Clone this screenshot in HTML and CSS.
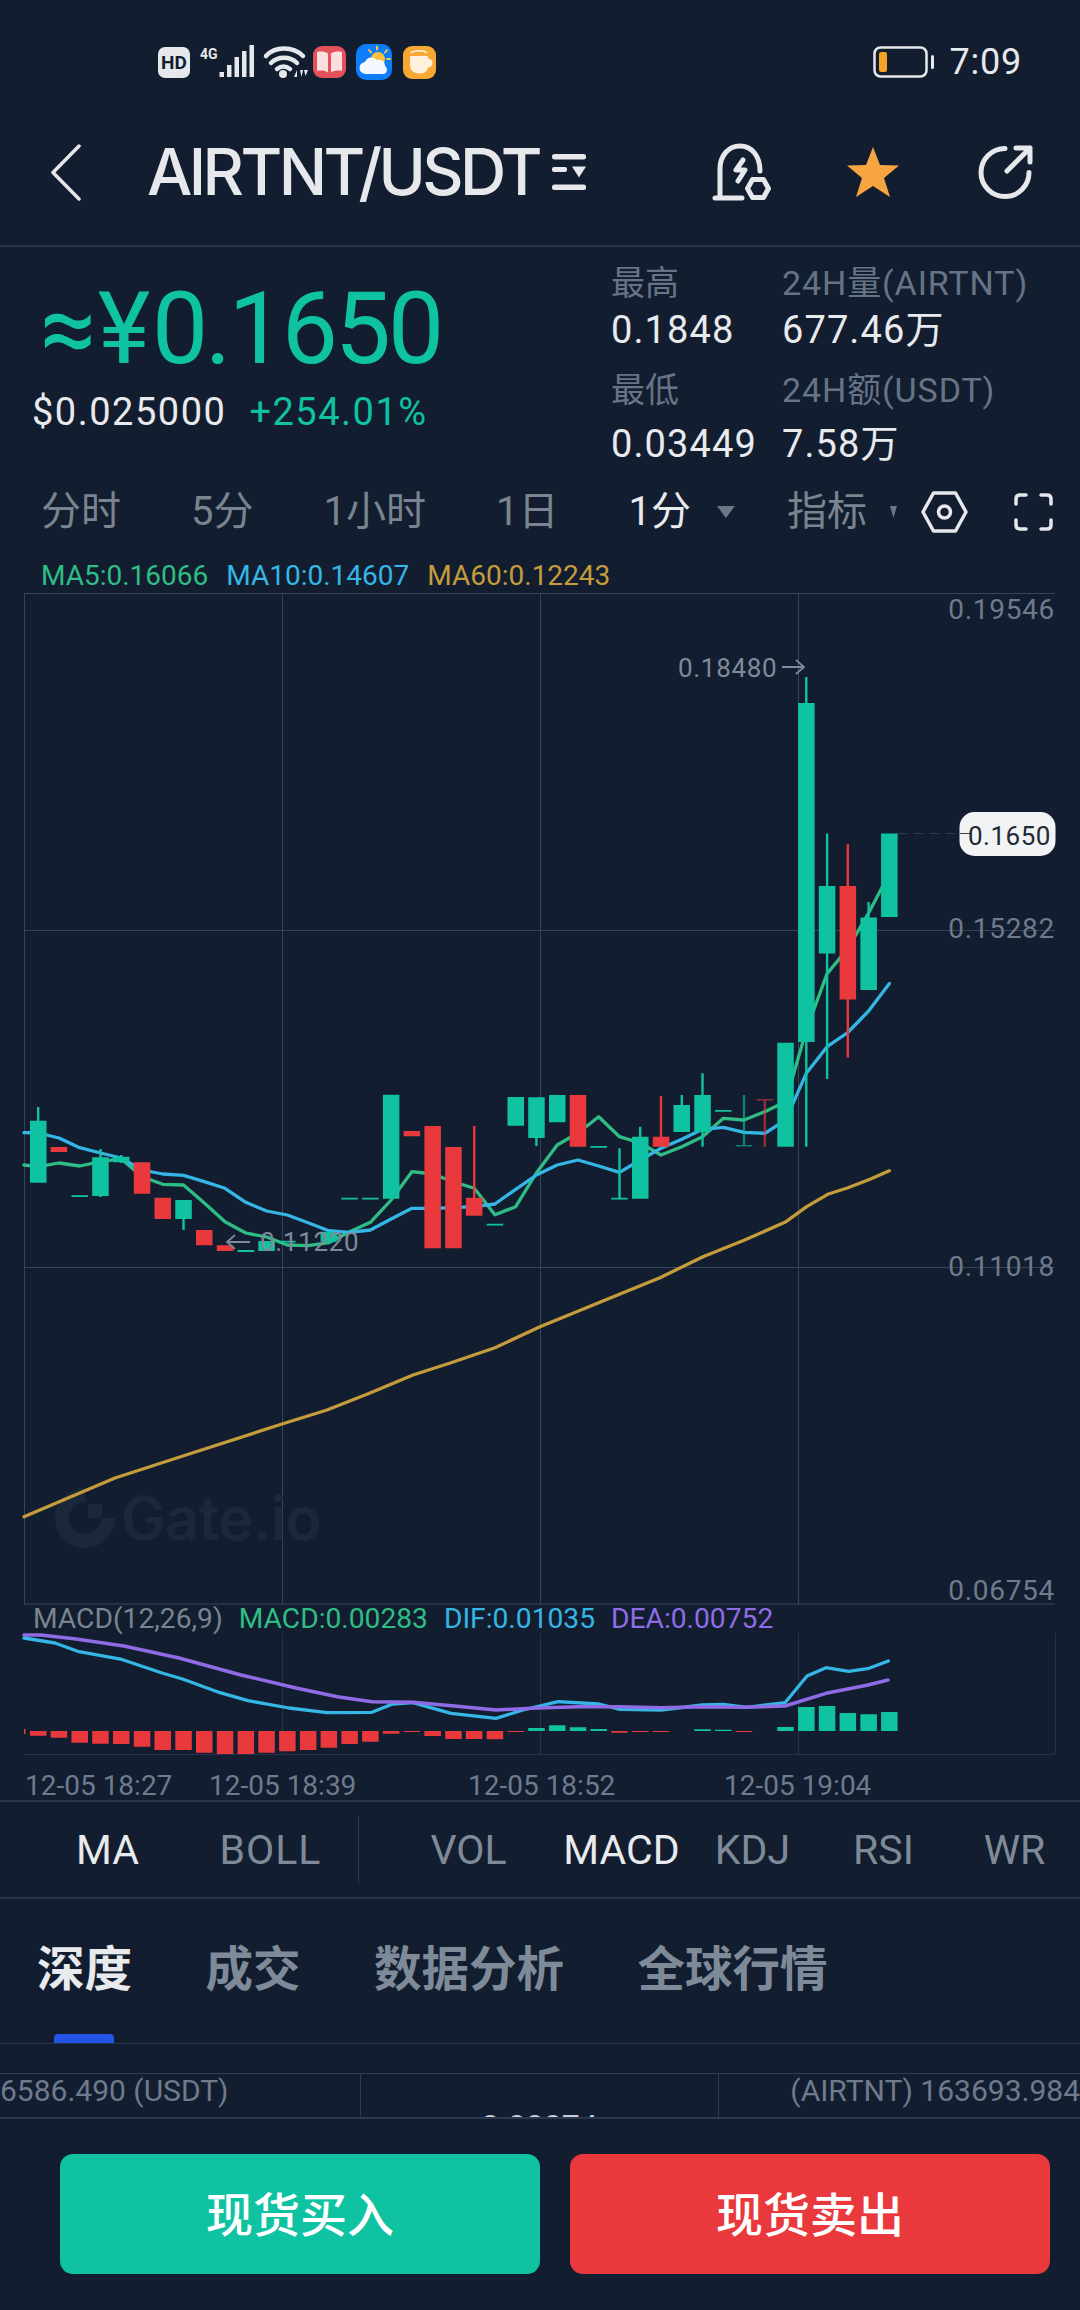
FILE: index.html
```html
<!DOCTYPE html>
<html lang="zh">
<head>
<meta charset="utf-8">
<title>AIRTNT/USDT</title>
<link rel="stylesheet" href="styles.css">
</head>
<body>
<main class="app">
  <header class="status">
    <svg class="status-icons" width="280" height="40" viewBox="0 0 280 40">
      <rect x="1" y="5" width="32" height="31" rx="7" class="ic-fill"/>
      <text x="17" y="27" class="hd">HD</text>
      <text x="43" y="17" class="g4">4G</text>
      <path class="ic-fill" d="M62.500 30h4.500v5h-4.500zM70 23h4.500v12h-4.500zM77.500 15h4.500v20h-4.500zM85 9h4.500v26h-4.500zM92.500 3h4.500v32h-4.500z"/>
      <path class="ic-line wifi" d="M109 14C118 4 136 4 146 14M114 21C121 14 133 14 140 21M120 27C124 24 129 24 133 27"/>
      <circle cx="126" cy="32" r="4" class="ic-fill"/>
      <path class="ic-fill" d="M137 35l3-7v7zM143 28h3l-1.500 7zM147 28h4l-2.500 6z"/>
      <rect x="156" y="4" width="33" height="32" rx="9" fill="#e5505a"/>
      <path fill="#fbdfe0" d="M160 10c4-1 8-.5 11 1.500v19c-3-2-7-2.500-11-1.500zM185 10c-4-1-8-.5-11 1.500v19c3-2 7-2.500 11-1.500z"/>
      <rect x="199" y="2" width="36" height="36" rx="10" fill="#0d7dfa"/>
      <path stroke="#ffc23f" stroke-width="2" stroke-linecap="round" d="M220 4.500v3M230 8l-2 2.500M212 8l2 2.500M233 17h-3"/>
      <circle cx="221" cy="17" r="7" fill="#ffc23f"/>
      <path fill="#f5f9ff" d="M209 32a6 6 0 0 1-1-12 7 7 0 0 1 12-2 6 6 0 0 1 8 6 4.500 4.500 0 0 1-1 8z"/>
      <rect x="246" y="4" width="33" height="33" rx="9" fill="#f8a834"/>
      <path fill="#fff1dc" d="M253 14h18v2.500a4.500 4.500 0 0 1 0 9c-1 4-4 6-9 6-6 0-9-4-9-9z"/>
      <path fill="none" stroke="#fff1dc" stroke-width="1.500" d="M254 11c3-3 13-3 16 0"/>
    </svg>
    <div class="clock">
      <svg class="battery" width="62" height="32" viewBox="0 0 62 32">
        <rect x="1.500" y="1.500" width="52" height="29" rx="6" class="bat-body"/>
        <rect x="6" y="6" width="8" height="20" rx="2" fill="#f5a324"/>
        <rect x="58" y="9" width="3" height="14" rx="1.500" class="ic-fill"/>
      </svg>
      <span class="time">7:09</span>
    </div>
  </header>

  <nav class="nav">
    <svg class="back" width="31" height="57" viewBox="0 0 31 57"><path d="M29 2L3 28.500 29 55"/></svg>
    <h1 class="pair">AIRTNT/USDT</h1>
    <svg class="pair-menu" width="34" height="36" viewBox="0 0 34 36">
      <rect width="34" height="5.500" rx="2.500" class="ic-fill"/>
      <rect y="13" width="15" height="5" rx="2" class="ic-fill"/>
      <path class="ic-fill" d="M20 12.500h14l-7 11z"/>
      <rect y="30.500" width="34" height="5.500" rx="2.500" class="ic-fill"/>
    </svg>
    <svg class="act-alert" width="60" height="59" viewBox="0 0 60 59">
      <path class="ic-line" d="M8 55V26C8 12 17 3 28 3s20 9 20 25M3 55h27M31 17l-7 10h9l-7 11M35.500 45.500l5-9h11l5 9-5 9h-11z"/>
    </svg>
    <svg class="act-star" width="52" height="50" viewBox="0 0 52 50"><path fill="#f7a540" d="M26 0l7 18 19 .5-15 12.500 6 19-17-11-17 11 6-19L0 18.500 19 18z"/></svg>
    <svg class="act-share" width="55" height="54" viewBox="0 0 55 54"><path class="ic-line" d="M27 3.500A24 24 0 1 0 51 27.500M29 26L52 3M38 3h14v14"/></svg>
  </nav>

  <section class="ticker">
    <div class="quote">
      <div class="price"><span class="sym">≈¥</span>0.1650</div>
      <div class="sub"><span class="usd">$0.025000</span><span class="chg">+254.01%</span></div>
    </div>
    <dl class="stats">
      <div class="stat"><dt>最高</dt><dd>0.1848</dd></div>
      <div class="stat"><dt>24H量(AIRTNT)</dt><dd>677.46万</dd></div>
      <div class="stat low"><dt>最低</dt><dd>0.03449</dd></div>
      <div class="stat low"><dt>24H额(USDT)</dt><dd>7.58万</dd></div>
    </dl>
  </section>

  <div class="periods">
    <span>分时</span><span>5分</span><span>1小时</span><span>1日</span><span class="on">1分</span>
    <i class="caret"></i>
    <span class="ind">指标</span>
    <i class="caret small"></i>
    <svg class="gear" width="47" height="42" viewBox="0 0 47 42"><path class="ic-line thin" d="M2 21L12.500 2h22L45 21 34.500 40h-22z"/><circle cx="23.500" cy="21" r="6" class="ic-line thin"/></svg>
    <svg class="full" width="39" height="38" viewBox="0 0 39 38"><path class="ic-line thin" d="M2 11V6q0-4 4-4h6M27 2h6q4 0 4 4v5M37 27v5q0 4-4 4h-6M12 36H6q-4 0-4-4v-5"/></svg>
  </div>

  <div class="legend">
    <span class="c-ma5">MA5:0.16066</span><span class="c-ma10">MA10:0.14607</span><span class="c-ma60">MA60:0.12243</span>
  </div>

  <svg class="chart" width="1080" height="1012" viewBox="0 593 1080 1012">
    <path class="grid" d="M24 593.500H1055M24 930.500H1055M24 1267.500H1055M24 1604H1055M24.500 593V1604M282.500 593V1604M540.500 593V1604M798.500 593V1604"/>
    <g class="mark">
      <path class="mark-ring" d="M85 1495A23 23 0 1 0 108 1518"/>
      <path class="mark-dot" d="M88 1504h14v14H88z"/>
      <text x="121" y="1540" class="mark-text">Gate.io</text>
    </g>
    <path class="line ma60" d="M24 1516.700L115 1478 186 1455 282 1424 327 1410 370 1393 413 1375 451 1362.700 495 1347.700 540 1326.700 620 1294 660 1277.700 703 1256.700 744.700 1240 786 1221.700 806.700 1206.700 827.700 1194.300 848 1187.700 870 1179.300 889.300 1170.700"/>
    <path class="line ma5" d="M24 1165L38.200 1166.700 59 1163 79.700 1166 100.500 1161.700 121.200 1158.700 142 1176.700 162.800 1184.300 183.500 1185 204.300 1203 225 1221.700 245.800 1233 266.600 1237 287.300 1245 308.100 1245.700 328.800 1242.700 349.600 1231.700 370.400 1222.300 391.100 1200 411.900 1171.700 432.600 1174 453.400 1181.700 474.200 1188.300 494.900 1214.700 515.700 1206.700 536.400 1173 557.200 1145 578 1133 598.700 1116.700 619.500 1136.700 640.200 1143 661 1155 681.800 1146.700 702.500 1136.700 723.300 1118.300 744 1120 764.800 1111.700 785.600 1101.700 806.300 1030 827.100 973.600 847.800 948.600 868.600 913 889.400 873.600"/>
    <path class="line ma10" d="M24 1132.700L38.200 1133 59 1138 79.700 1147.700 100.500 1153 121.200 1158 142 1170 162.800 1174 183.500 1175.300 204.300 1181.700 225 1188.300 245.800 1202.300 266.600 1211 287.300 1215 308.100 1222.700 328.800 1230.700 349.600 1232.300 370.400 1230 391.100 1219 411.900 1208.300 432.600 1208.300 453.400 1207.700 474.200 1206.700 494.900 1204 515.700 1189.300 536.400 1175 557.200 1165 578 1160 598.700 1166 619.500 1172.300 640.200 1160 661 1148.300 681.800 1139.300 702.500 1129.300 723.300 1127.300 744 1132.300 764.800 1133.300 785.600 1120 806.300 1073.300 827.100 1046.700 847.800 1032.500 868.600 1011 889.400 983.600"/>
    <path class="up" d="M30 1120.700h16.500v62H30zM37 1107h2.400v14H37zM71.500 1195.200h16.500v1.800H71.500zM92.200 1157.300h16.500V1196H92.200zM99.300 1149h2.400v48h-2.400zM113 1156.700h16.500v5.600H113zM120 1155h2.400v8H120zM175.300 1200h16.500v19h-16.500zM182.300 1219h2.400v11h-2.400zM237.600 1250h16.500v2h-16.500zM258.300 1241h16.500v10h-16.500zM279.100 1240.700h16.500v1.800h-16.500zM320.600 1231.700h16.500v10h-16.500zM341.400 1197.800h16.500v1.800h-16.500zM362.100 1197.800h16.500v1.800h-16.500zM382.900 1094.700h16.500v104h-16.500zM486.700 1223.800h16.500v1.800h-16.500zM507.500 1097H524v28.700h-16.500zM528.200 1097.300h16.500v40.700h-16.500zM535.200 1138h2.400v8h-2.400zM549 1095h16.500v27.300H549zM590.500 1146h16.500v1.800h-16.500zM618.300 1148.300h2.400v50.400h-2.400zM611.200 1197.700h16.500v1.800h-16.500zM632 1136.700h16.500v62H632zM639 1126.700h2.400v10.300H639zM673.500 1105H690v27h-16.500zM680.600 1095H683v10h-2.400zM694.300 1095h16.500v37h-16.500zM701.300 1073.300h2.400v73.400h-2.400zM715 1110h16.500v1.800H715zM777.300 1042.700h16.500v104h-16.500zM798.100 703h16.500v339h-16.500zM805.100 677h2.400v26h-2.400zM805.100 1042h2.400v104.800h-2.400zM818.800 886h16.500v67.600h-16.500zM825.900 833.600h2.400V1079h-2.400zM860.400 917.500h16.500V990h-16.500zM867.400 902h2.400v15.500h-2.400zM881.100 833.600h16.500V917h-16.500z"/>
    <path class="up dim" d="M742.800 1095h2.400v51h-2.400zM735.800 1145h16.500v1.600h-16.500z"/>
    <path class="dn" d="M50.700 1147h16.500v5H50.700zM133.800 1162.300h16.500v31.400h-16.500zM154.500 1197.700H171V1219h-16.500zM196 1230h16.500v15.300H196zM216.800 1245.300h16.500v5.700h-16.500zM403.600 1131h16.500v5.300h-16.500zM424.400 1126h16.500v122.300h-16.500zM445.200 1147h16.500v101.300h-16.500zM465.900 1197.700h16.500v18h-16.500zM473 1126h2.400v72H473zM569.700 1095h16.500v51.700h-16.500zM652.800 1136.700h16.500v10h-16.500zM659.800 1096h2.400v41h-2.400zM839.600 886h16.500v113.600h-16.500zM846.600 844.300h2.400v213.200h-2.400z"/>
    <path class="dn dim" d="M763.600 1100h2.400v46.700h-2.400zM756.600 1099h16.500v1.600h-16.500z"/>
    <text x="678" y="677" class="note">0.18480</text>
    <path class="note-line" d="M782 667h22M796 660l8 7-8 7"/>
    <path class="note-line" d="M250 1242h-22M235 1235l-8 7 8 7"/>
    <text x="260" y="1251" class="note">0.11220</text>
    <text x="1055" y="619" class="axis-y">0.19546</text>
    <text x="1055" y="938" class="axis-y">0.15282</text>
    <text x="1055" y="1276" class="axis-y">0.11018</text>
    <text x="1055" y="1600" class="axis-y">0.06754</text>
    <path class="last-dash" d="M898 833.500H960"/>
    <rect x="959.500" y="812" width="96" height="44" rx="15" class="last-tag"/>
    <path class="last-tick" d="M960 833.500H972"/>
    <text x="968" y="845" class="last-text">0.1650</text>
  </svg>

  <div class="macd-legend">
    <span class="c-muted">MACD(12,26,9)</span><span class="c-ma5">MACD:0.00283</span><span class="c-ma10">DIF:0.01035</span><span class="c-dea">DEA:0.00752</span>
  </div>

  <svg class="macd" width="1080" height="124" viewBox="0 1633 1080 124">
    <path class="grid faint" d="M24 1754.500H1055M1055.500 1633V1754M282.500 1633V1754M540.500 1633V1754M798.500 1633V1754"/>
    <path class="bar-dn" d="M30 1731h16.500v4.700H30zM50.700 1731h16.500v6.700H50.700zM71.500 1731H88v11.700H71.500zM92.200 1731h16.500v12.700H92.200zM113 1731h16.500v13H113zM133.800 1731h16.500v15.700h-16.500zM154.500 1731H171v19h-16.500zM175.300 1731h16.500v19h-16.500zM196 1731h16.500v21.700H196zM216.800 1731h16.500v23h-16.500zM237.600 1731h16.500v23h-16.500zM258.300 1731h16.500v21.700h-16.500zM279.100 1731h16.500v20.300h-16.500zM299.900 1731h16.500v19h-16.500zM320.600 1731h16.500v16.700h-16.500zM341.400 1731h16.500v13h-16.500zM362.100 1731h16.500v10.700h-16.500zM382.900 1731h16.500v2.700h-16.500zM403.600 1731h16.500v1h-16.500zM424.400 1731h16.500v5h-16.500zM445.200 1731h16.500v8h-16.500zM465.900 1731h16.500v8h-16.500zM486.700 1731h16.500v8.300h-16.500zM507.500 1731H524v1h-16.500zM611.200 1731h16.500v1.700h-16.500zM632 1731h16.500v1h-16.500zM652.800 1731h16.500v1h-16.500zM735.800 1731h16.500v1h-16.500zM24 1729h1.500v5H24z"/>
    <path class="bar-up" d="M528.200 1728h16.500v3h-16.500zM549 1725.300h16.500v5.700H549zM569.700 1727.300h16.500v3.700h-16.500zM590.500 1729h16.500v2h-16.500zM694.300 1729.300h16.500v1.700h-16.500zM715 1729.700h16.500v1.300H715zM777.300 1727h16.500v4h-16.500zM798.100 1707h16.500v24h-16.500zM818.800 1706h16.500v25h-16.500zM839.600 1713h16.500v18h-16.500zM860.400 1714.300h16.500V1731h-16.500zM881.100 1712h16.500v19h-16.500z"/>
    <path class="line dif" d="M24 1638L55 1643 79 1651.700 120.500 1659 162 1673 182.500 1679 220 1692.700 248 1700.700 289 1708 327 1712.700 372 1712.300 392.600 1704 413 1702.700 451 1713.300 496 1718.300 523 1710 558 1701.700 599 1704 620 1709.300 661 1710 702.500 1705 723 1704.300 747 1707.300 785 1702.700 807 1676 826 1667.700 848.500 1671.300 869 1668.300 888.400 1661"/>
    <path class="line dea" d="M24 1635L41 1635 76 1639 124 1646 179 1658 241 1675 296 1688 337.500 1696.700 372 1701.700 413 1702.300 454.500 1706 496 1710 537 1708 578.500 1706.700 620 1706.700 661 1707.700 702.500 1706.700 744 1707.300 785 1706 826 1693.300 868 1685 888 1680"/>
  </svg>

  <div class="times"><span>12-05 18:27</span><span>12-05 18:39</span><span>12-05 18:52</span><span>12-05 19:04</span></div>

  <div class="indicators">
    <div class="ind-main"><span class="on">MA</span><span class="wide">BOLL</span></div>
    <div class="ind-sub"><span>VOL</span><span class="on">MACD</span><span>KDJ</span><span>RSI</span><span>WR</span></div>
  </div>

  <div class="tabs">
    <span class="tab on">深度</span><span class="tab">成交</span><span class="tab">数据分析</span><span class="tab">全球行情</span>
  </div>

  <div class="depth">
    <div class="depth-row">
      <div class="cell left">6586.490 (USDT)</div>
      <div class="cell mid">0.00074</div>
      <div class="cell right">(AIRTNT) 163693.984</div>
    </div>
  </div>

  <footer class="actions">
    <button class="btn buy">现货买入</button>
    <button class="btn sell">现货卖出</button>
  </footer>
</main>
</body>
</html>
```

FILE: styles.css
```css
* { box-sizing: border-box; }
html, body { margin: 0; padding: 0; background: #121e2f; }
body { font-family: Roboto, "Noto Sans CJK SC", sans-serif; color: #e8eaed; }
.app { width: 1080px; height: 2310px; overflow: hidden; background: #121e2f; }

.ic-fill { fill: #e6e8eb; }
.ic-line { fill: none; stroke: #e6e8eb; stroke-width: 5; stroke-linecap: round; stroke-linejoin: round; }
.ic-line.thin { stroke-width: 3.5; }
.ic-line.wifi { stroke-width: 4.5; }
.bat-body { fill: none; stroke: #e6e8eb; stroke-width: 2.5; }

.status { height: 124px; display: flex; align-items: center; padding: 0 58px 0 157px; justify-content: space-between; }
.status-icons { display: block; }
.hd { font: 700 19px Roboto, sans-serif; fill: #121e2f; text-anchor: middle; }
.g4 { font: 700 14px Roboto, sans-serif; fill: #e6e8eb; }
.clock { display: flex; align-items: center; gap: 14px; }
.battery { display: block; }
.time { font-size: 36px; line-height: 40px; letter-spacing: .8px; color: #e6e8eb; }

.nav { height: 123px; padding: 0 47px 25px 50px; display: flex; align-items: center; border-bottom: 2px solid #27364b; }
.back { display: block; fill: none; stroke: #e6e8eb; stroke-width: 3.5; stroke-linecap: round; stroke-linejoin: round; }
.pair { margin: 0 0 0 66px; font: 500 64px/72px Inter, Roboto, sans-serif; letter-spacing: -3.6px; color: #e6e8eb; white-space: nowrap; }
.pair-menu { margin-left: 13px; }
.act-alert { margin-left: auto; overflow: visible; }
.act-star { margin-left: 75px; }
.act-share { margin-left: 79px; overflow: visible; }

.ticker { height: 223px; display: flex; }
.quote { width: 611px; padding: 32px 0 0 32px; }
.price { font-size: 100px; line-height: 100px; color: #0fc3a2; margin-left: 8px; letter-spacing: -3px; white-space: nowrap; }
.sym { letter-spacing: 1.5px; }
.sub { display: flex; gap: 23px; margin-top: 11px; font-size: 38px; line-height: 44px; letter-spacing: 1.5px; }
.usd { color: #e8eaed; }
.chg { color: #0fc3a2; }
.stats { margin: 18px 0 0; display: grid; grid-template-columns: 171px auto; row-gap: 19px; align-content: start; }
.stat dt { font-size: 34px; line-height: 36px; color: #677386; white-space: nowrap; }
.stat:nth-child(even) dt { letter-spacing: .9px; }
.stat dd { margin: 6px 0 0; font-size: 38px; line-height: 46px; letter-spacing: 1.1px; color: #e8eaed; white-space: nowrap; }
.stat.low dd { margin-top: 13px; }

.periods { height: 84px; padding-left: 41px; display: flex; align-items: center; gap: 70px; font-size: 40px; line-height: 44px; color: #79848f; }
.periods span { white-space: nowrap; }
.periods .on { color: #e8eaed; }
.caret { display: block; width: 18px; height: 12px; background: #6b7686; clip-path: polygon(0 0, 100% 0, 50% 100%); margin-left: -44px; }
.periods .ind { margin-left: -18px; }
.caret.small { width: 7px; margin-left: -47px; }
.gear { margin-left: -46px; }
.full { margin-left: -24px; }

.legend { height: 39px; padding: 7px 0 0 41px; display: flex; gap: 18px; font-size: 28px; line-height: 30px; }
.c-ma5 { color: #2fbd85; }
.c-ma10 { color: #35b6e6; }
.c-ma60 { color: #c59c3c; }
.c-dea { color: #8f6ce6; }
.c-muted { color: #79848f; }

.chart, .macd { display: block; }
.chart { overflow: visible; }
.grid { fill: none; stroke: #36445a; stroke-width: 1; }
.grid.faint { stroke: #25334a; }
.line { fill: none; stroke-width: 3.3; stroke-linejoin: round; stroke-linecap: round; }
.ma5 { stroke: #2fbd85; }
.ma10, .dif { stroke: #35b6e6; }
.ma60 { stroke: #c59c3c; }
.dea { stroke: #8f6ce6; stroke-width: 3.5; }
.up { fill: #0fc3a2; }
.dn { fill: #e9393d; }
.dim { opacity: .6; }
.bar-up { fill: #0fc3a2; }
.bar-dn { fill: #e9393d; }
.mark-ring { fill: none; stroke: #1b2839; stroke-width: 14; }
.mark-dot { fill: #1b2839; }
.mark-text { font: 600 60px Inter, Roboto, sans-serif; fill: #1b2839; letter-spacing: -1px; }
.note { font-size: 26px; letter-spacing: .7px; fill: #7f8a9b; }
.note-line { fill: none; stroke: #7f8a9b; stroke-width: 1.800; }
.axis-y { font-size: 28px; letter-spacing: .7px; fill: #6f7a8c; text-anchor: end; }
.last-dash { stroke: #2b3a4d; stroke-width: 1; stroke-dasharray: 10 6; fill: none; }
.last-tag { fill: #f2f3f4; }
.last-tick { stroke: #444; stroke-width: 1; fill: none; }
.last-text { font-size: 26px; letter-spacing: .5px; fill: #222a33; }

.macd-legend { height: 28px; padding-left: 33px; display: flex; gap: 16px; font-size: 28.200px; line-height: 28px; white-space: nowrap; }

.times { height: 45px; padding: 15px 0 0 25px; display: grid; grid-template-columns: 184px 259px 256px auto; font-size: 28px; line-height: 28px; color: #6f7a8c; border-bottom: 2px solid #27364b; white-space: nowrap; }

.indicators { height: 97px; display: flex; align-items: center; border-bottom: 2px solid #27364b; font-size: 41px; color: #7f8a99; }
.indicators .on { color: #e8eaed; }
.wide { letter-spacing: 1px; }
.ind-main { width: 365px; height: 66px; padding-left: 42px; display: grid; grid-template-columns: 131px 131px; column-gap: 32px; align-items: center; text-align: center; border-right: 1px solid #2e3c50; }
.ind-sub { padding-left: 44px; display: grid; grid-template-columns: 153px 131px 131px 131px 131px; align-items: center; text-align: center; }
.ind-sub span:first-child { width: 131px; }

.tabs { height: 145px; padding: 0 0 19px 37px; display: flex; align-items: center; gap: 73.500px; border-bottom: 1px solid #27364b; font-size: 47.500px; line-height: 54px; font-weight: 700; color: #7f8a99; }
.tab { position: relative; height: 100%; display: flex; align-items: center; padding-top: 16px; }
.tab.on { color: #e8eaed; }
.tab.on::after { content: ""; position: absolute; left: 17px; bottom: -19px; width: 60px; height: 9px; border-radius: 4px 4px 0 0; background: #2354e6; }

.depth { height: 75px; padding-top: 29px; border-bottom: 2px solid #2a3950; }
.depth-row { height: 44px; display: grid; grid-template-columns: 360px 359px 361px; overflow: hidden; border-top: 1px solid #2e3c50; font-size: 30px; line-height: 32px; color: #6f7a8c; }
.cell { height: 44px; padding-top: 1px; white-space: nowrap; overflow: hidden; }
.cell.mid { border-left: 1px solid #2e3c50; border-right: 1px solid #2e3c50; padding-top: 36px; text-align: center; color: #c8ccd2; font-size: 32px; }
.cell.right { text-align: right; }

.actions { height: 191px; padding: 35px 30px 0 60px; display: flex; gap: 30px; }
.btn { flex: 1; height: 120px; padding: 0 0 5px; border: 0; border-radius: 13px; color: #fff; font: 500 47px "Noto Sans CJK SC", sans-serif; }
.buy { background: #0fc3a2; }
.sell { background: #e9393d; }
```
